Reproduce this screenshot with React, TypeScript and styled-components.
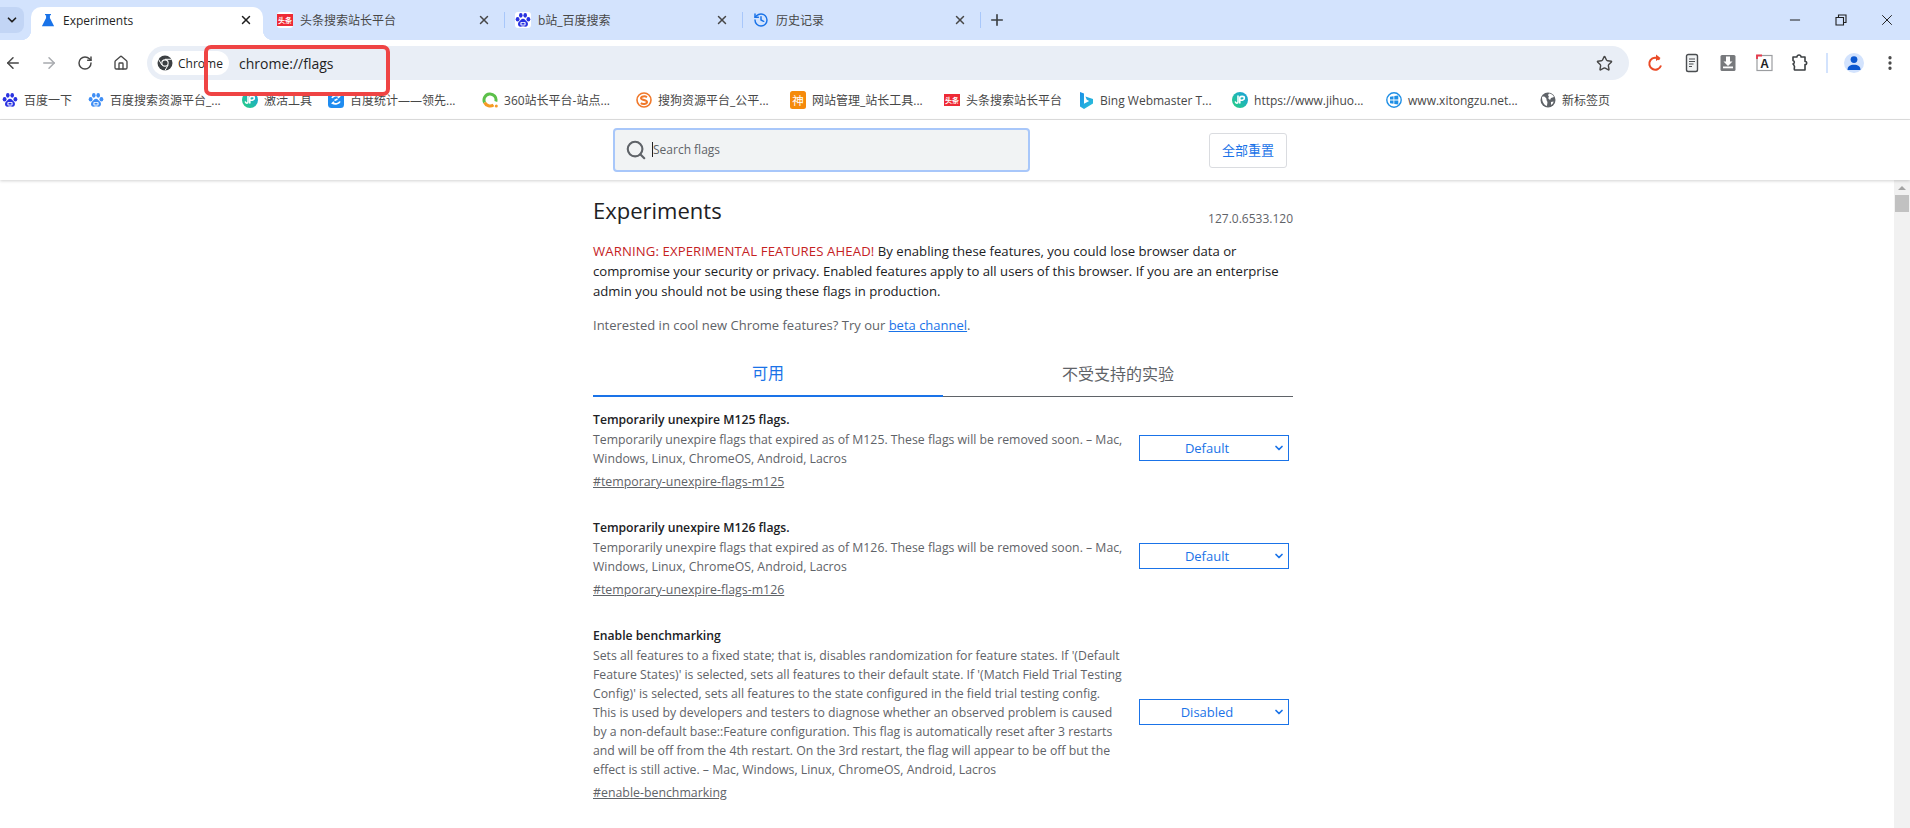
import React from "react";
import styled, { createGlobalStyle } from "styled-components";
import { ArrowLeft, ArrowRight, RotateCw, Home, Star, X, Plus, ChevronDown, History, Search, MoreVertical, Minus } from "lucide-react";

const SANS = `"Open Sans", "Noto Sans CJK SC", sans-serif`;

const GlobalStyle = createGlobalStyle`
  html, body { margin: 0; padding: 0; height: 100%; background: #fff; overflow: hidden; }
  body { font-family: ${SANS}; }
  * { box-sizing: border-box; }
`;

//Favicons
const BaiduIcon = ({ color = "#2932e1" }: { color?: string }) => (
  <svg width="16" height="16" viewBox="0 0 16 16">
    <g fill={color}>
      <ellipse cx="2.6" cy="7.2" rx="1.9" ry="2.3" />
      <ellipse cx="5.8" cy="3.3" rx="1.8" ry="2.4" />
      <ellipse cx="10.2" cy="3.3" rx="1.8" ry="2.4" />
      <ellipse cx="13.4" cy="7.2" rx="1.9" ry="2.3" />
      <path d="M8 6.8c-2 0-2.6 2-4 3-1.400 1-1.600 4.900 1.400 4.900 1 0 1.600-.4 2.600-.4s1.600.4 2.600.4c3 0 2.800-3.900 1.400-4.900-1.400-1-2-3-4-3z" />
    </g>
    <rect x="5.4" y="10" width="5.200" height="3.400" rx="1" fill="#fff" />
    <rect x="6.500" y="10.800" width="3" height="1.800" fill={color} />
  </svg>
);

const ToutiaoIcon = () => (
  <svg width="16" height="16" viewBox="0 0 16 16">
    <rect y="2" width="16" height="12" fill="#ee2a35" />
    <text x="8" y="11" textAnchor="middle" fontSize="7" fontWeight="700" fill="#fff" fontFamily="Noto Sans CJK SC">头条</text>
  </svg>
);

const JihuoIcon = () => (
  <svg width="16" height="16" viewBox="0 0 16 16">
    <defs>
      <linearGradient id="jh" x1="0" y1="1" x2="1" y2="0">
        <stop offset="0" stopColor="#27d17f" />
        <stop offset="1" stopColor="#1a9fe0" />
      </linearGradient>
    </defs>
    <circle cx="8" cy="8" r="8" fill="url(#jh)" />
    <path d="M6 4v6c0 1.500-2.400 1.500-2.600 0M7.800 11V6c0-2.200 4.600-2.200 4.600 0s-3 2.400-4 2" fill="none" stroke="#fff" strokeWidth="1.600" strokeLinecap="round" />
  </svg>
);

const TongjiIcon = () => (
  <svg width="16" height="16" viewBox="0 0 16 16">
    <rect width="16" height="16" rx="3.500" fill="#1f8cf0" />
    <path d="M4 6c1-2.500 5-3 7.500-1.800L10 6M12 9.500c-1 2.500-5 3-7.500 1.800L6 9.800" fill="none" stroke="#fff" strokeWidth="1.700" />
    <path d="M6.500 8.500l3-1.500" stroke="#fff" strokeWidth="1.500" />
  </svg>
);

const Ring360Icon = () => (
  <svg width="16" height="16" viewBox="0 0 16 16">
    <path d="M2.600 10.500A6 6 0 1 1 13.800 9.500" fill="none" stroke="#5cc04a" strokeWidth="3" />
    <path d="M2.600 10.500A6 6 0 0 0 11.500 12.900" fill="none" stroke="#f59a23" strokeWidth="3" />
    <circle cx="14.300" cy="14" r="1.500" fill="#f59a23" />
  </svg>
);

const SogouIcon = () => (
  <svg width="16" height="16" viewBox="0 0 16 16">
    <circle cx="8" cy="8" r="7" fill="#fff" stroke="#f0782a" strokeWidth="1.600" />
    <path d="M11 5.200C9 3.800 5 4.200 5 6.200s6 1.600 6 3.800-4.300 2.500-6.200 1.200" fill="none" stroke="#f0782a" strokeWidth="2" />
  </svg>
);

const ShenIcon = () => (
  <svg width="16" height="18" viewBox="0 0 16 18">
    <rect width="16" height="18" rx="2.500" fill="#f58a0b" />
    <text x="8" y="13.500" textAnchor="middle" fontSize="11.500" fill="#fff" fontFamily="Noto Sans CJK SC">神</text>
  </svg>
);

const BingIcon = () => (
  <svg width="16" height="18" viewBox="0 0 16 18">
    <defs>
      <linearGradient id="bg" x1="0" y1="0" x2="1" y2="1">
        <stop offset="0" stopColor="#1b8fe8" />
        <stop offset="1" stopColor="#2bc3d8" />
      </linearGradient>
    </defs>
    <path d="M2 1l4 1.400v10.400l5.200-2.900-2.400-1.100-1.400-3.400 7.600 2.600v4.400L6 18l-4-2.400z" fill="url(#bg)" />
  </svg>
);

const XitongzuIcon = () => (
  <svg width="16" height="16" viewBox="0 0 16 16">
    <circle cx="8" cy="8" r="7.200" fill="#fff" stroke="#1f8fe5" strokeWidth="1.400" />
    <path d="M4 4.800l3.500-.6v3.400H4zM8.300 4l4-.6v4.200h-4zM4 8.400h3.500v3.400L4 11.200zM8.300 8.400h4v4.200l-4-.6z" fill="#1f8fe5" />
  </svg>
);

const GlobeIcon = () => (
  <svg width="16" height="16" viewBox="0 0 16 16">
    <circle cx="8" cy="8" r="7.500" fill="#5f6368" />
    <path d="M2 5c2-1 3 0 4 1s0 2 1 3 0 3 0 5C4 13 2 10 2 5zM9 1.500c2 0 4 1.500 5 3.500l-3 1-1 2-2-2 1-1-1-2zM11 10l2.500-.5c0 1.500-1 2.500-2.500 3.500z" fill="#fff" />
  </svg>
);

const FlaskIcon = () => (
  <svg width="14" height="14" viewBox="0 0 16 16">
    <path d="M4.600 1h6.800v1.500h-1.200v3.300L15 15H1L5.800 5.800V2.500H4.600z" fill="#1a73e8" />
  </svg>
);

const ChromeIcon = () => (
  <svg width="16" height="16" viewBox="0 0 16 16">
    <circle cx="8" cy="8" r="7.500" fill="#3c4043" />
    <circle cx="8" cy="8" r="3.700" fill="#fff" />
    <circle cx="8" cy="8" r="2.600" fill="#3c4043" />
    <path d="M8 4.300h6.600M4.800 9.900L1.500 4.300M11.200 9.900L8 15.400" stroke="#fff" strokeWidth="1" />
  </svg>
);

//Toolbar extension icons
const RedReloadIcon = () => (
  <svg width="20" height="20" viewBox="0 0 20 20">
    <path d="M13.600 6.500A6 6 0 1 0 15 12.500" fill="none" stroke="#ea4a26" strokeWidth="2" />
    <path d="M10.500 2l4.500 3.500-4.500 3z" fill="#ea4a26" transform="translate(-.5 -.5)" />
  </svg>
);

const ReaderIcon = () => (
  <svg width="20" height="20" viewBox="0 0 20 20">
    <rect x="4.500" y="1.500" width="11" height="17" rx="1.800" fill="#f1f3f4" stroke="#4a4d50" strokeWidth="1.400" />
    <path d="M7 6h6M7 8.500h6M7 11h4.500M7 13.500h3" stroke="#4a4d50" strokeWidth="1.200" />
  </svg>
);

const SaveIcon = () => (
  <svg width="20" height="20" viewBox="0 0 20 20">
    <rect x="2.500" y="2" width="15" height="16" rx="1.500" fill="#77797c" />
    <path d="M8 3.500h4v5h2.500L10 13 5.500 8.500H8z" fill="#fff" />
    <rect x="5" y="13.500" width="10" height="1.800" fill="#fff" />
  </svg>
);

const TranslateIcon = () => (
  <svg width="20" height="20" viewBox="0 0 20 20">
    <rect x="3" y="2.500" width="15" height="15" fill="#fff" stroke="#9b9da0" strokeWidth="1.200" />
    <path d="M3 6V2.500h5" fill="none" stroke="#e6394a" strokeWidth="1.800" />
    <text x="10.500" y="14.500" textAnchor="middle" fontSize="12" fontWeight="600" fill="#202124" fontFamily="Liberation Sans">A</text>
  </svg>
);

const PuzzleIcon = () => (
  <svg width="20" height="20" viewBox="0 0 20 20">
    <path d="M3 4h4c-.3-2.700 4.300-2.700 4 0h4v4.500c2.200-.6 2.200 3.600 0 3V17H4.500c-1-2 1-3-.5-4.500 0-1-1-1-1-1.500 2-1 1.500-3 0-3.500z" fill="none" stroke="#3c4043" strokeWidth="1.600" strokeLinejoin="round" />
  </svg>
);

//Data
const tabs = [
  { title: "头条搜索站长平台", icon: <ToutiaoIcon />, white: true },
  { title: "b站_百度搜索", icon: <BaiduIcon />, white: true },
  { title: "历史记录", icon: <History size={16} color="#1a73e8" strokeWidth={2.200} />, white: false },
];

const bookmarks = [
  { title: "百度一下", icon: <BaiduIcon /> },
  { title: "百度搜索资源平台_...", icon: <BaiduIcon color="#3f8ef5" />, elided: true },
  { title: "激活工具", icon: <JihuoIcon /> },
  { title: "百度统计——领先...", icon: <TongjiIcon />, elided: true },
  { title: "360站长平台-站点...", icon: <Ring360Icon />, elided: true },
  { title: "搜狗资源平台_公平...", icon: <SogouIcon />, elided: true },
  { title: "网站管理_站长工具...", icon: <ShenIcon />, elided: true },
  { title: "头条搜索站长平台", icon: <ToutiaoIcon /> },
  { title: "Bing Webmaster T...", icon: <BingIcon />, elided: true },
  { title: "https://www.jihuo...", icon: <JihuoIcon />, elided: true },
  { title: "www.xitongzu.net...", icon: <XitongzuIcon />, elided: true },
  { title: "新标签页", icon: <GlobeIcon /> },
];

const experiments = [
  {
    title: "Temporarily unexpire M125 flags.",
    lines: [
      "Temporarily unexpire flags that expired as of M125. These flags will be removed soon. – Mac,",
      "Windows, Linux, ChromeOS, Android, Lacros",
    ],
    link: "#temporary-unexpire-flags-m125",
    value: "Default",
  },
  {
    title: "Temporarily unexpire M126 flags.",
    lines: [
      "Temporarily unexpire flags that expired as of M126. These flags will be removed soon. – Mac,",
      "Windows, Linux, ChromeOS, Android, Lacros",
    ],
    link: "#temporary-unexpire-flags-m126",
    value: "Default",
  },
  {
    title: "Enable benchmarking",
    lines: [
      "Sets all features to a fixed state; that is, disables randomization for feature states. If '(Default",
      "Feature States)' is selected, sets all features to their default state. If '(Match Field Trial Testing",
      "Config)' is selected, sets all features to the state configured in the field trial testing config.",
      "This is used by developers and testers to diagnose whether an observed problem is caused",
      "by a non-default base::Feature configuration. This flag is automatically reset after 3 restarts",
      "and will be off from the 4th restart. On the 3rd restart, the flag will appear to be off but the",
      "effect is still active. – Mac, Windows, Linux, ChromeOS, Android, Lacros",
    ],
    link: "#enable-benchmarking",
    value: "Disabled",
  },
];

const App: React.FC = () => {
  return (
    <Page>
      <GlobalStyle />
      <TabStrip>
        <TabSearch>
          <ChevronDown size={14} color="#1f1f1f" strokeWidth={3} />
        </TabSearch>
        <ActiveTab>
          <FlaskIcon />
          <TabTitle $active>Experiments</TabTitle>
          <X size={14} color="#1f1f1f" strokeWidth={2.500} />
        </ActiveTab>
        {tabs.map((t) => (
          <Tab key={t.title}>
            <TabFavicon $white={t.white}>{t.icon}</TabFavicon>
            <TabTitle>{t.title}</TabTitle>
            <X size={14} color="#474747" strokeWidth={2.500} />
          </Tab>
        ))}
        <NewTab>
          <Plus size={18} color="#3c4043" strokeWidth={2.200} />
        </NewTab>
        <WindowControls>
          <WindowButton><Minus size={16} color="#1f1f1f" strokeWidth={1.500} /></WindowButton>
          <WindowButton>
            <svg width="12" height="12" viewBox="0 0 12 12">
              <path d="M1 3.500h7.500V11H1zM3.500 3.500V1H11v7.500H8.500" fill="none" stroke="#1f1f1f" strokeWidth="1.100" />
            </svg>
          </WindowButton>
          <WindowButton><X size={18} color="#1f1f1f" strokeWidth={1.300} /></WindowButton>
        </WindowControls>
      </TabStrip>

      <Toolbar>
        <NavButton><ArrowLeft size={18} color="#474747" strokeWidth={2} /></NavButton>
        <NavButton><ArrowRight size={18} color="#a8abaf" strokeWidth={2} /></NavButton>
        <NavButton><RotateCw size={16} color="#474747" strokeWidth={2.200} /></NavButton>
        <NavButton><Home size={16} color="#474747" strokeWidth={2} /></NavButton>
        <Omnibox>
          <ChromeChip>
            <ChromeIcon />
            <span>Chrome</span>
          </ChromeChip>
          <UrlText>chrome://flags</UrlText>
          <OmniStar><Star size={17} color="#474747" strokeWidth={2} /></OmniStar>
        </Omnibox>
        <ExtensionArea>
          <NavButton><RedReloadIcon /></NavButton>
          <NavButton><ReaderIcon /></NavButton>
          <NavButton><SaveIcon /></NavButton>
          <NavButton><TranslateIcon /></NavButton>
          <NavButton><PuzzleIcon /></NavButton>
          <ToolbarDivider />
          <AvatarCircle>
            <svg width="16" height="16" viewBox="0 0 16 16">
              <circle cx="8" cy="4.600" r="3.400" fill="#0b57d0" />
              <path d="M1.500 15c0-3.600 2.600-5.200 6.500-5.200s6.500 1.600 6.500 5.200z" fill="#0b57d0" />
            </svg>
          </AvatarCircle>
          <NavButton><MoreVertical size={18} color="#474747" strokeWidth={2.400} /></NavButton>
        </ExtensionArea>
      </Toolbar>

      <BookmarkBar>
        {bookmarks.map((b) => (
          <Bookmark key={b.title} $elided={b.elided}>
            <FaviconSlot>{b.icon}</FaviconSlot>
            <span>{b.title}</span>
          </Bookmark>
        ))}
      </BookmarkBar>

      <FlagsHeader>
        <SearchBox>
          <Search size={22} color="#5f6368" strokeWidth={2.300} />
          <Caret />
          <Placeholder>Search flags</Placeholder>
        </SearchBox>
        <ResetButton>全部重置</ResetButton>
      </FlagsHeader>

      <ContentRow>
        <Main>
          <TitleRow>
            <h1>Experiments</h1>
            <span>127.0.6533.120</span>
          </TitleRow>
          <Blurb>
            <Warning>WARNING: EXPERIMENTAL FEATURES AHEAD!</Warning> By enabling these features, you could lose browser data or
            <br />
            compromise your security or privacy. Enabled features apply to all users of this browser. If you are an enterprise
            <br />
            admin you should not be using these flags in production.
          </Blurb>
          <Channel>
            Interested in cool new Chrome features? Try our <a href="#beta">beta channel</a>.
          </Channel>
          <TabHeader>
            <FlagTab $active>可用</FlagTab>
            <FlagTab>不受支持的实验</FlagTab>
          </TabHeader>
          {experiments.map((e) => (
            <Experiment key={e.title}>
              <ExperimentText>
                <h2>{e.title}</h2>
                {e.lines.map((l) => (
                  <p key={l}>{l}</p>
                ))}
                <a href={e.link}>{e.link}</a>
              </ExperimentText>
              <SelectBox>
                <span>{e.value}</span>
                <ChevronDown size={12} color="#1a73e8" strokeWidth={3.500} />
              </SelectBox>
            </Experiment>
          ))}
        </Main>
        <Scrollbar>
          <ScrollArrow />
          <ScrollThumb />
        </Scrollbar>
      </ContentRow>

      <Annotation />
    </Page>
  );
};

const Page = styled.div`
  position: relative;
  width: 1910px;
  height: 828px;
  overflow: hidden;
  background: #fff;
  display: flex;
  flex-direction: column;
`;

const TabStrip = styled.div`
  height: 40px;
  background: #d3e3fd;
  display: flex;
  align-items: flex-end;
  flex-shrink: 0;
`;

const TabSearch = styled.div`
  width: 24px;
  height: 26px;
  margin: 0 7px 7px 0;
  background: #c2d5f5;
  border-radius: 0 8px 8px 0;
  display: flex;
  align-items: center;
  justify-content: center;
`;

const ActiveTab = styled.div`
  position: relative;
  width: 232px;
  height: 33px;
  background: #fff;
  border-radius: 10px 10px 0 0;
  display: flex;
  align-items: center;
  padding: 0 10px 7px 10px;
  gap: 8px;
  color: #1f1f1f;
  &::after {
    content: "";
    position: absolute;
    right: -10px;
    bottom: 0;
    width: 10px;
    height: 10px;
    background: radial-gradient(circle at 100% 0, transparent 10px, #fff 10.5px);
  }
  &::before {
    content: "";
    position: absolute;
    left: -10px;
    bottom: 0;
    width: 10px;
    height: 10px;
    background: radial-gradient(circle at 0 0, transparent 10px, #fff 10.5px);
  }
`;

const TabTitle = styled.span<{ $active?: boolean }>`
  flex: 1;
  font-size: 12px;
  white-space: nowrap;
  color: ${(p) => (p.$active ? "#1f1f1f" : "#474747")};
`;

const TabFavicon = styled.span<{ $white?: boolean }>`
  width: 16px;
  height: 16px;
  flex-shrink: 0;
  display: flex;
  border-radius: 3px;
  background: ${(p) => (p.$white ? "#fff" : "transparent")};
`;

const Tab = styled.div`
  position: relative;
  width: 238px;
  height: 33px;
  display: flex;
  align-items: center;
  padding: 0 10px 7px 14px;
  gap: 7px;
  &::before {
    content: "";
    position: absolute;
    right: -4px;
    top: 5px;
    width: 1.5px;
    height: 16px;
    background: #a8c7fa;
  }
`;

const NewTab = styled.div`
  width: 34px;
  height: 33px;
  margin-left: 3px;
  padding-bottom: 7px;
  display: flex;
  align-items: center;
  justify-content: center;
`;

const WindowControls = styled.div`
  margin-left: auto;
  align-self: flex-start;
  display: flex;
`;

const WindowButton = styled.div`
  width: 46px;
  height: 40px;
  display: flex;
  align-items: center;
  justify-content: center;
`;

const Toolbar = styled.div`
  height: 46px;
  flex-shrink: 0;
  background: #fff;
  display: flex;
  align-items: center;
  margin-left: -5px;
`;

const NavButton = styled.div`
  width: 36px;
  height: 34px;
  flex-shrink: 0;
  display: flex;
  align-items: center;
  justify-content: center;
`;

const Omnibox = styled.div`
  width: 1482px;
  height: 34px;
  margin-left: 8px;
  border-radius: 17px;
  background: #e9eef6;
  display: flex;
  align-items: center;
  padding: 0 13px 0 5px;
`;

const ChromeChip = styled.div`
  width: 77px;
  height: 24px;
  border-radius: 12px;
  background: #fff;
  display: flex;
  align-items: center;
  gap: 5px;
  padding-left: 5px;
  font-size: 12px;
  color: #1f1f1f;
`;

const UrlText = styled.div`
  margin-left: 10px;
  font-size: 14px;
  color: #1f1f1f;
`;

const OmniStar = styled.div`
  margin-left: auto;
  width: 24px;
  display: flex;
  justify-content: center;
`;

const ExtensionArea = styled.div`
  margin-left: 9px;
  display: flex;
  align-items: center;
`;

const ToolbarDivider = styled.div`
  width: 2px;
  height: 20px;
  background: #d3e3fd;
  margin: 0 8px;
`;

const AvatarCircle = styled.div`
  width: 20px;
  height: 20px;
  border-radius: 50%;
  background: #d3e3fd;
  margin: 0 8px;
  display: flex;
  align-items: center;
  justify-content: center;
`;

const BookmarkBar = styled.div`
  height: 34px;
  flex-shrink: 0;
  padding-bottom: 5px;
  border-bottom: 1px solid #e0e0e0;
  display: flex;
  align-items: center;
  padding-left: 2px;
`;

const Bookmark = styled.div<{ $elided?: boolean }>`
  display: flex;
  align-items: center;
  flex-shrink: 0;
  width: ${(p) => (p.$elided ? "154px" : "auto")};
  padding-right: 16px;
  font-size: 12px;
  white-space: nowrap;
  color: #474747;
`;

const FaviconSlot = styled.span`
  width: 16px;
  height: 18px;
  margin-right: 6px;
  display: flex;
  align-items: center;
  justify-content: center;
  flex-shrink: 0;
`;

const FlagsHeader = styled.div`
  height: 60px;
  flex-shrink: 0;
  padding-left: 613px;
  display: flex;
  align-items: center;
  box-shadow: 0 1px 3px rgba(0, 0, 0, 0.18);
  position: relative;
  z-index: 1;
`;

const SearchBox = styled.div`
  width: 417px;
  height: 44px;
  border: 2px solid #a8c7fa;
  border-radius: 4px;
  background: #f1f3f4;
  display: flex;
  align-items: center;
  padding-left: 10px;
  padding-bottom: 1px;
`;

const Caret = styled.span`
  width: 1px;
  height: 15px;
  background: #202124;
  margin-left: 5px;
`;

const Placeholder = styled.span`
  font-size: 12px;
  color: #5f6368;
`;

const ResetButton = styled.div`
  width: 78px;
  height: 35px;
  margin-left: 179px;
  padding-bottom: 2px;
  border: 1px solid #dadce0;
  border-radius: 3px;
  display: flex;
  align-items: center;
  justify-content: center;
  font-size: 13px;
  color: #1a73e8;
`;

const ContentRow = styled.div`
  flex: 1;
  min-height: 0;
  display: flex;
`;

const Main = styled.div`
  width: 1894px;
  padding-left: 593px;
  padding-right: 601px;
`;

const TitleRow = styled.div`
  display: flex;
  justify-content: space-between;
  align-items: flex-end;
  height: 50px;
  padding-top: 13px;
  color: #202124;
  h1 {
    margin: 0 0 5px;
    font-size: 22px;
    font-weight: 400;
    line-height: 30px;
  }
  span {
    margin-bottom: 1px;
    font-size: 12px;
    line-height: 20px;
    color: #5f6368;
  }
`;

const Blurb = styled.p`
  margin: 11px 0 0;
  font-size: 13.15px;
  line-height: 20px;
  white-space: nowrap;
  color: #202124;
`;

const Warning = styled.span`
  color: #c5221f;
  letter-spacing: 0.12px;
`;

const Channel = styled.p`
  margin: 14px 0 0;
  font-size: 13px;
  line-height: 20px;
  white-space: nowrap;
  color: #5f6368;
  a {
    color: #1a73e8;
  }
`;

const TabHeader = styled.div`
  margin: 14px 0 11px;
  display: flex;
  border-bottom: 1px solid #5f6368;
  height: 48px;
`;

const FlagTab = styled.div<{ $active?: boolean }>`
  flex: 1;
  display: flex;
  align-items: center;
  justify-content: center;
  font-size: 16px;
  margin-bottom: ${(p) => (p.$active ? "-1px" : "0")};
  border-bottom: ${(p) => (p.$active ? "2px solid #1a73e8" : "0")};
  color: ${(p) => (p.$active ? "#1a73e8" : "#5f6368")};
`;

const Experiment = styled.div`
  margin-bottom: 25px;
  display: flex;
  align-items: center;
`;

const ExperimentText = styled.div`
  width: 546px;
  flex-shrink: 0;
  padding-top: 2px;
  h2 {
    margin: 0 0 1px;
    font-size: 12.2px;
    line-height: 19px;
    font-weight: 600;
    color: #202124;
  }
  p {
    margin: 0;
    font-size: 12.28px;
    line-height: 19px;
    white-space: nowrap;
    color: #5f6368;
  }
  a {
    display: block;
    margin-top: 4px;
    font-size: 12.35px;
    line-height: 19px;
    color: #5f6368;
    text-decoration: underline;
  }
`;

const SelectBox = styled.div`
  width: 150px;
  height: 26px;
  margin-top: -3px;
  border: 1.5px solid #1a73e8;
  display: flex;
  align-items: center;
  font-size: 13px;
  color: #1a73e8;
  span {
    width: 134px;
    text-align: center;
  }
  svg {
    margin-left: -1px;
  }
`;

const Scrollbar = styled.div`
  width: 16px;
  background: #f1f1f1;
  display: flex;
  flex-direction: column;
  align-items: center;
  padding-top: 6px;
  flex-shrink: 0;
`;

const ScrollArrow = styled.div`
  width: 0;
  height: 0;
  border-left: 4px solid transparent;
  border-right: 4px solid transparent;
  border-bottom: 4px solid #a3a3a3;
`;

const ScrollThumb = styled.div`
  width: 14px;
  height: 17px;
  margin-top: 5px;
  background: #c1c1c1;
`;

// the red marker drawn over the screenshot
const Annotation = styled.div`
  position: absolute;
  left: 204px;
  top: 45px;
  width: 186px;
  height: 51px;
  border: 4px solid #ef4444;
  border-radius: 7px;
  pointer-events: none;
`;

export default App;
